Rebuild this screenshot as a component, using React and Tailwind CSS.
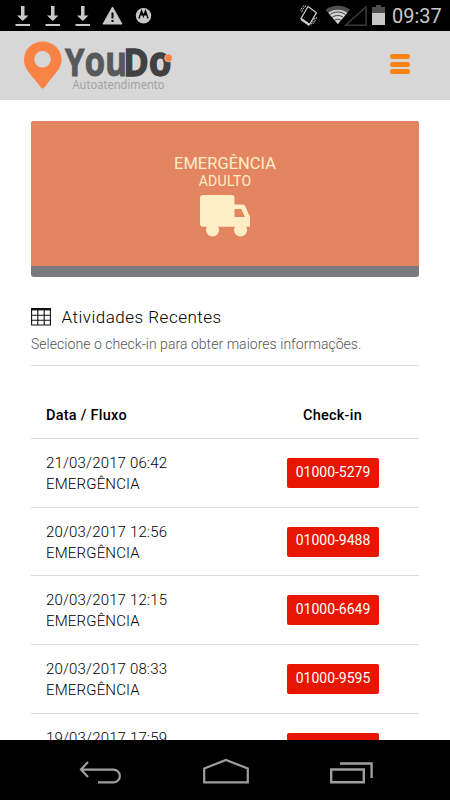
const rows = [
  { date: '21/03/2017 06:42', code: '01000-5279' },
  { date: '20/03/2017 12:56', code: '01000-9488' },
  { date: '20/03/2017 12:15', code: '01000-6649' },
  { date: '20/03/2017 08:33', code: '01000-9595' },
  { date: '19/03/2017 17:59', code: '01000-9312' },
];

function DownloadIcon() {
  return (
    <svg width="16" height="22" viewBox="0 0 16 22" fill="#c8c8c8">
      <path d="M6 1h3.500v9.500h4L7.800 16 2 10.500h4z" />
      <path d="M.5 19h14.500v2H.5z" />
    </svg>
  );
}

function StatusBar() {
  return (
    <div className="flex h-[31px] shrink-0 items-start bg-black pt-[5px] pl-[15px] pr-2">
      <div className="flex gap-[14px]">
        <DownloadIcon />
        <DownloadIcon />
        <DownloadIcon />
      </div>
      <svg className="ml-[11px]" width="22" height="22" viewBox="0 0 22 22">
        <path d="M10.500 2L20 19H1z" fill="#c8c8c8" stroke="#c8c8c8" strokeLinejoin="round" />
        <path d="M9.500 7.500h2v6h-2zM9.500 15h2v2h-2z" fill="#000" />
      </svg>
      <svg className="ml-[11px]" width="18" height="22" viewBox="0 0 18 22">
        <circle cx="8.500" cy="10.700" r="7.700" fill="#c8c8c8" />
        <path d="M4 13.500C5 10 5.700 8 6.500 6L8.500 11l2-5c.8 2 1.500 4 2.500 7.500M6.500 6v4.500M10.500 6v4.500" fill="none" stroke="#000" strokeWidth="1.400" />
      </svg>
      <svg className="ml-auto" width="18" height="22" viewBox="0 0 18 22" fill="none" stroke="#c8c8c8">
        <path d="M8 1.500l8.500 6.200-7 11.800L1 13.500z" strokeWidth="1.300" strokeLinejoin="round" />
        <path d="M1 14l8.500 6" strokeWidth="2.400" />
        <path d="M6 .8C3.500 2.500 2.500 4.500 1.500 8M4 .5C2 2.200 1 4 .6 6M16.500 12c-1 4-2.500 6-5 8M14.500 13c-.8 3-2 4.500-3.500 6" strokeDasharray="2 1" />
      </svg>
      <svg className="ml-[7px]" width="43" height="22" viewBox="0 0 43 22">
        <path d="M.5 4.700C7-.7 18.500-.7 25 4.700L12.800 19z" fill="#505050" />
        <path d="M3.300 8C8.500 3.800 17 3.800 22.200 8L12.800 19z" fill="#d0d0d0" />
        <path d="M4.700 9.800c4.500-3.700 11.600-3.700 16.100 0M7 12.500c3.300-2.700 8.200-2.700 11.500 0M9.500 15.400c2-1.500 4.600-1.500 6.500 0" fill="none" stroke="#333" strokeWidth=".9" />
        <path d="M41 2v18.300H20.500z" fill="#000" stroke="#3c3c3c" strokeWidth="1.500" />
      </svg>
      <svg className="ml-[4px]" width="14" height="22" viewBox="0 0 14 22">
        <path d="M4 0h5v2h4v6H0V2h4z" fill="#505050" />
        <path d="M0 8h13v12H0z" fill="#c8c8c8" />
      </svg>
      <span className="ml-[6px] w-[50px] whitespace-nowrap text-[20px] leading-[22px] text-[#c8c8c8]">09:37</span>
    </div>
  );
}

function Logo() {
  return (
    <svg width="152" height="60" viewBox="0 0 152 60">
      <path fillRule="evenodd" d="M19.700 4.500C9.200 4.500 1 12.500 1 22.700 1 33 9.700 38.500 17.700 50.300q2 2.500 4 0C29 38.500 38.600 33 38.600 22.700 38.600 12.500 30.200 4.500 19.700 4.500zM19.500 14a8.300 8.300 0 1 1 0 16.600 8.300 8.300 0 0 1 0-16.600z" fill="#f98345" />
      <g fontFamily="'Noto Sans', sans-serif" fontWeight="700">
        <text x="42" y="39.300" fontSize="38" textLength="62" lengthAdjust="spacingAndGlyphs" fill="#58595b" stroke="#58595b" strokeWidth=".9">Y<tspan fontSize="40.500">ou</tspan></text>
        <text x="100.500" y="39.300" fontSize="38" textLength="48" lengthAdjust="spacingAndGlyphs" fill="#414042" stroke="#414042" strokeWidth="1.300">D<tspan fontSize="40.500">o</tspan></text>
      </g>
      <text x="49.500" y="51.700" textLength="92" lengthAdjust="spacingAndGlyphs" fill="#a3a3a3" fontFamily="'Noto Sans', sans-serif" fontSize="12">Autoatendimento</text>
      <circle cx="145.500" cy="21" r="3.900" fill="#f98345" stroke="#d7d7d7" strokeWidth=".6" />
    </svg>
  );
}

function Header() {
  return (
    <header className="flex h-[69px] shrink-0 items-start justify-between bg-[#d7d7d7] pl-[23px] pr-10 pt-[6px]">
      <Logo />
      <div className="mt-[17px] flex w-5 flex-col gap-[2.500px]">
        <span className="h-[5px] rounded-full bg-[#fb8316]" />
        <span className="h-[5px] rounded-full bg-[#fb8316]" />
        <span className="h-[5px] rounded-full bg-[#fb8316]" />
      </div>
    </header>
  );
}

function EmergencyCard() {
  return (
    <div className="flex h-[156px] shrink-0 flex-col overflow-hidden rounded-[3px] bg-[#7b797e]">
      <div className="flex h-[145px] flex-col items-center bg-[#e38560] pt-[33px] text-[#ffedc6]">
        <p className="text-[16.500px] leading-5">EMERGÊNCIA</p>
        <p className="text-[14px] leading-[14px] tracking-[0.300px]">ADULTO</p>
        <svg className="mt-[7px]" width="50" height="42" viewBox="0 0 50 42" fill="currentColor">
          <path fillRule="evenodd" d="M3 0h28.500q3 0 3 3v6.500H43q1.500 0 2.200 1.500L50 22v9.700H3q-3 0-3-3V3q0-3 3-3zM34.500 14v8H45l-3.800-8z" />
          <circle cx="12.500" cy="34.800" r="6.600" />
          <circle cx="40.600" cy="34.800" r="6.600" />
        </svg>
      </div>
    </div>
  );
}

function TableIcon() {
  return (
    <svg width="20" height="18" viewBox="0 0 20 18">
      <path d="M.6 1v16h18.800V1M6.800 2v15M13.200 2v15M0 7.300h20M0 12.200h20" fill="none" stroke="#111" strokeWidth="1.100" />
      <path d="M0 0h20v2.400H0z" fill="#111" />
    </svg>
  );
}

function NavBar() {
  return (
    <nav className="flex h-[60px] shrink-0 items-center justify-between bg-black pl-[78px] pr-[77px] pt-[2px]">
      <svg width="43" height="26" viewBox="0 0 43 26" fill="none" stroke="#9e9e9e" strokeWidth="2.200">
        <path d="M10 4L3 11.600 10 19M3 11.600h32.500a6.300 6.300 0 0 1 0 12.700H20" />
      </svg>
      <svg width="46" height="26" viewBox="0 0 46 26" fill="none" stroke="#9e9e9e" strokeWidth="2.200">
        <path d="M1.200 24.300V10.500L23 2l21.800 8.500v13.800z" />
      </svg>
      <svg width="43" height="26" viewBox="0 0 43 26" fill="none" stroke="#9e9e9e" strokeWidth="2.400">
        <path d="M1.200 11.500h32.600v12.800H1.200zM10 5.500h31.600V20" />
      </svg>
    </nav>
  );
}

export default function App() {
  return (
    <div className="flex h-[800px] w-[450px] flex-col overflow-hidden bg-white font-['Roboto',sans-serif]">
      <StatusBar />
      <Header />
      <main className="flex min-h-0 flex-1 flex-col overflow-hidden px-[31px] pt-[21px]">
        <EmergencyCard />
        <div className="mt-[30px] flex shrink-0 items-center gap-[10.500px]">
          <TableIcon />
          <h2 className="text-[17px] font-light leading-5 tracking-[0.500px] text-black">Atividades Recentes</h2>
        </div>
        <p className="mt-2 shrink-0 border-b border-[#dcdcdc] pb-[12px] text-[14px] font-light leading-[18px] tracking-[0.040px] text-[#555]">
          Selecione o check-in para obter maiores informações.
        </p>
        <div className="mt-[24px] grid h-[49px] shrink-0 grid-cols-[214px_174px] items-center border-b border-[#dcdcdc] pt-[3px] text-[14.500px] font-medium tracking-[0.250px] text-black">
          <span className="pl-[15px]">Data / Fluxo</span>
          <span className="pl-[1px] text-center">Check-in</span>
        </div>
        {rows.map((row) => (
          <div key={row.date} className="grid h-[68.700px] shrink-0 grid-cols-[214px_174px] items-start border-b border-[#dcdcdc] pt-[13px]">
            <div className="pl-[15px] pt-[1px] text-[15px] font-light leading-[21px] tracking-[0.160px] text-black">
              <p>{row.date}</p>
              <p>EMERGÊNCIA</p>
            </div>
            <div className="flex justify-center pl-[1px] pt-[6px]">
              <span className="flex h-[30px] w-[92px] justify-center rounded-[2px] bg-[#e81500] pl-[1px] pt-[3.500px] text-[14px] leading-5 text-white">{row.code}</span>
            </div>
          </div>
        ))}
      </main>
      <NavBar />
    </div>
  );
}
